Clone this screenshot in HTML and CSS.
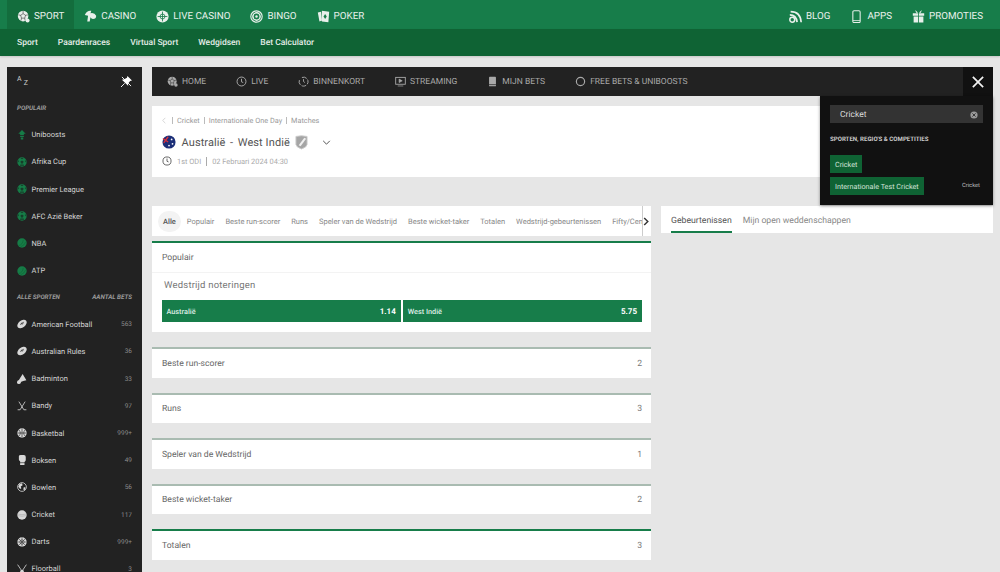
FILE: index.html
```html
<!DOCTYPE html>
<html lang="nl">
<head>
    <meta charset="UTF-8">
    <title>Australië - West Indië</title>
    <link rel="stylesheet" href="styles.css">
</head>
<body>
    <svg class="sprites" width="0" height="0">
        <symbol id="i-ball" viewBox="0 0 16 16"><circle cx="7.5" cy="7.5" r="6.5" fill="currentColor"/><path d="M7.5 4.5l3 2-1 3.5h-4l-1-3.5zM7.5 1v3.5M1.500 6l3 .5M13.500 6l-3 .5M5 13l.5-3M10 13l-.5-3" stroke="#000" stroke-opacity=".55" fill="none"/><circle cx="13" cy="13" r="2.500" fill="currentColor"/></symbol>
        <symbol id="i-round" viewBox="0 0 16 16"><circle cx="8" cy="8" r="7.500" fill="currentColor"/><path d="M3 12q6-1 7-9M6 14q6-2 8-8" stroke="#0f6334" fill="none"/></symbol>
        <symbol id="i-soccer" viewBox="0 0 16 16"><circle cx="8" cy="8" r="7.500" fill="currentColor"/><path d="M8 5.500l2.500 1.800-1 3h-3l-1-3zM5.500 1.500h5L8 3.500zM1 9l.5-4 2 1.500zM15 9l-.5-4-2 1.500zM4.500 14l1-2h5l1 2z" fill="#173d2a"/></symbol>
        <symbol id="i-oval" viewBox="0 0 16 16"><ellipse cx="8" cy="8" rx="8.500" ry="5.500" transform="rotate(-38 8 8)" fill="currentColor"/><path d="M5 9l6-4M6.500 6.500l2 2.500M8 5.500l2 2.500" stroke="#222" fill="none"/></symbol>
        <symbol id="i-shuttle" viewBox="0 0 16 16"><path d="M9 0l6 10-5 1-5 2-3-2z" fill="currentColor"/><circle cx="3" cy="13" r="3" fill="currentColor"/></symbol>
        <symbol id="i-sticks" viewBox="0 0 16 16"><path d="M3 1l8 13h4M13 1L5 14H1" stroke="currentColor" stroke-width="1.300" fill="none"/></symbol>
        <symbol id="i-basket" viewBox="0 0 16 16"><circle cx="8" cy="8" r="7.500" fill="currentColor"/><path d="M1 8h14M8 1v14M3 3c3 3 3 7 0 10M13 3c-3 3-3 7 0 10" stroke="#222" fill="none"/></symbol>
        <symbol id="i-glove" viewBox="0 0 16 16"><path d="M3 2q0-2 3-2h5q3 0 3 3v5q0 2-2 3v1H5v-2Q3 9 3 7z" fill="currentColor"/><rect x="5" y="13" width="7" height="3" fill="currentColor"/></symbol>
        <symbol id="i-globe" viewBox="0 0 16 16"><circle cx="8" cy="8" r="7" fill="none" stroke="currentColor" stroke-width="1.300"/><path d="M4 3l4-1 1 3-3 2 1 3-2 1-3-4zM11 8l3 1-2 4-2-1z" fill="currentColor"/></symbol>
        <symbol id="i-cricket" viewBox="0 0 16 16"><circle cx="8" cy="8" r="7.500" fill="currentColor"/><path d="M1.500 6.500q6.500 2 13 0M1.500 9q6.500 2 13 0" stroke="#aaa" fill="none"/></symbol>
        <symbol id="i-darts" viewBox="0 0 16 16"><circle cx="8" cy="8" r="7.500" fill="currentColor"/><path d="M8 .5v15M.5 8h15M2.700 2.700l10.600 10.600M13.300 2.700L2.700 13.300" stroke="#222" stroke-width=".8"/><circle cx="8" cy="8" r="3.500" fill="none" stroke="#222" stroke-width=".8"/></symbol>
        <symbol id="i-floor" viewBox="0 0 16 16"><path d="M1 1l6 9M15 1L9 10" stroke="currentColor" stroke-width="1.300"/><circle cx="8" cy="12" r="3" fill="currentColor"/></symbol>
        <symbol id="i-clock" viewBox="0 0 16 16"><circle cx="8" cy="8" r="6.500" fill="none" stroke="currentColor" stroke-width="1.400"/><path d="M8 4v4.500l2.500 1" fill="none" stroke="currentColor" stroke-width="1.400"/></symbol>
    </svg>

    <header class="top-nav">
        <nav class="main-links">
            <a class="main-link active"><svg class="nav-icon"><use href="#i-ball"/></svg>SPORT</a>
            <a class="main-link">
                <svg class="nav-icon" viewBox="0 0 16 16"><path d="M1 6q3-6 8-5l-1 3q5-1 7 3 0 4-4 4-2 0-3-2l-1 5H4l1-7z" fill="currentColor"/></svg>CASINO
            </a>
            <a class="main-link">
                <svg class="nav-icon" viewBox="0 0 16 16"><circle cx="8" cy="8" r="7.500" fill="currentColor"/><path d="M8 2v12M2 8h12" stroke="#177d4a"/><circle cx="8" cy="8" r="3" fill="none" stroke="#177d4a"/></svg>LIVE CASINO
            </a>
            <a class="main-link">
                <svg class="nav-icon" viewBox="0 0 16 16"><circle cx="8" cy="8" r="7" fill="none" stroke="currentColor" stroke-width="1.400"/><circle cx="8" cy="8" r="4.500" fill="none" stroke="currentColor" stroke-width="1.800"/><circle cx="8" cy="8" r="1.500" fill="currentColor"/></svg>BINGO
            </a>
            <a class="main-link">
                <svg class="nav-icon" viewBox="0 0 16 16"><path d="M1 3l4-1 1 11-3 1zM6 1l9 1-1 13-8-1z" fill="currentColor"/><path d="M10 5l2 3-2 3-2-3z" fill="#177d4a"/></svg>POKER
            </a>
        </nav>
        <nav class="side-links">
            <a class="main-link">
                <svg class="nav-icon" viewBox="0 0 16 16"><circle cx="4" cy="12" r="3" fill="none" stroke="currentColor" stroke-width="1.800"/><path d="M1 6q8 0 9 9M2 2q12 0 13 13" fill="none" stroke="currentColor" stroke-width="2"/></svg>BLOG
            </a>
            <a class="main-link">
                <svg class="nav-icon" viewBox="0 0 16 16"><rect x="3.500" y="1" width="9" height="14.500" rx="1.500" fill="none" stroke="currentColor" stroke-width="1.300"/><path d="M3.500 13h9" stroke="currentColor"/></svg>APPS
            </a>
            <a class="main-link">
                <svg class="nav-icon" viewBox="0 0 16 16"><path d="M1 4h6.500v3H1zM8.500 4H15v3H8.500zM2 8h5.500v7.500H2zM8.500 8H14v7.500H8.500zM4 0l3.500 3.500H5zM12 0L8.500 3.500H11z" fill="currentColor"/></svg>PROMOTIES
            </a>
        </nav>
    </header>
    <nav class="sub-nav">
        <a>Sport</a>
        <a>Paardenraces</a>
        <a>Virtual Sport</a>
        <a>Wedgidsen</a>
        <a>Bet Calculator</a>
    </nav>

    <div class="page">
        <aside class="sidebar">
            <div class="side-head">
                <span class="az"><span>A</span><span>Z</span></span>
                <svg class="pin" viewBox="0 0 12 12"><path d="M7 0l5 5-2 .5-2.500 3L8 11 1 4l2.500-.5L6.500 2z" fill="#fff"/><path d="M4 8l-4 4M1 1l10 10" stroke="#fff"/></svg>
            </div>
            <div class="side-title first"><span>POPULAIR</span></div>
            <ul class="side-list popular">
                <li><svg viewBox="0 0 16 16"><path d="M8 0l6 6h-3v2H5V6H2zM5 9h6v2H5zM6 12h4v3H6z" fill="currentColor"/></svg><span>Uniboosts</span></li>
                <li><svg><use href="#i-soccer"/></svg><span>Afrika Cup</span></li>
                <li><svg><use href="#i-soccer"/></svg><span>Premier League</span></li>
                <li><svg><use href="#i-soccer"/></svg><span>AFC Azië Beker</span></li>
                <li><svg><use href="#i-round"/></svg><span>NBA</span></li>
                <li><svg><use href="#i-round"/></svg><span>ATP</span></li>
            </ul>
            <div class="side-title"><span>ALLE SPORTEN</span><span>AANTAL BETS</span></div>
            <ul class="side-list">
                <li><svg><use href="#i-oval"/></svg><span>American Football</span><em>563</em></li>
                <li><svg><use href="#i-oval"/></svg><span>Australian Rules</span><em>36</em></li>
                <li><svg><use href="#i-shuttle"/></svg><span>Badminton</span><em>33</em></li>
                <li><svg><use href="#i-sticks"/></svg><span>Bandy</span><em>97</em></li>
                <li><svg><use href="#i-basket"/></svg><span>Basketbal</span><em>999+</em></li>
                <li><svg><use href="#i-glove"/></svg><span>Boksen</span><em>49</em></li>
                <li><svg><use href="#i-globe"/></svg><span>Bowlen</span><em>56</em></li>
                <li><svg><use href="#i-cricket"/></svg><span>Cricket</span><em>117</em></li>
                <li><svg><use href="#i-darts"/></svg><span>Darts</span><em>999+</em></li>
                <li><svg><use href="#i-floor"/></svg><span>Floorball</span><em>3</em></li>
            </ul>
        </aside>

        <main class="content">
            <nav class="dark-bar">
                <a><svg><use href="#i-ball"/></svg>HOME</a>
                <a><svg><use href="#i-clock"/></svg>LIVE</a>
                <a><svg viewBox="0 0 16 16"><path d="M2 6a6.500 6.500 0 1 0 3-3.500" fill="none" stroke="currentColor" stroke-width="1.400" stroke-dasharray="7 2"/><path d="M8 4.500V8l2 1.500" fill="none" stroke="currentColor" stroke-width="1.300"/></svg>BINNENKORT</a>
                <a><svg viewBox="0 0 16 16"><rect x="1" y="2" width="14" height="10" fill="none" stroke="currentColor" stroke-width="1.300"/><path d="M6 4.500l4.500 2.500L6 9.500zM4 14.500h8" fill="currentColor" stroke="currentColor"/></svg>STREAMING</a>
                <a><svg viewBox="0 0 16 16"><rect x="3" y="1" width="10" height="14" rx="1" fill="currentColor"/><path d="M3 12.500h10" stroke="#222"/></svg>MIJN BETS</a>
                <a><svg viewBox="0 0 16 16"><circle cx="8" cy="8" r="6" fill="none" stroke="currentColor" stroke-width="1.700"/></svg>FREE BETS &amp; UNIBOOSTS</a>
            </nav>

            <section class="event-head">
                <div class="crumbs">
                    <svg class="crumb-back" viewBox="0 0 6 10"><path d="M5 1L1 5l4 4" fill="none" stroke="#c4c4c4"/></svg>
                    <i></i><span>Cricket</span><i></i><span>Internationale One Day</span><i></i><span>Matches</span>
                </div>
                <div class="event-title">
                    <svg class="flag" viewBox="0 0 16 16"><circle cx="8" cy="8" r="7.500" fill="#1c2f78"/><path d="M1 4l6 4M7 2L2 9" stroke="#d8303c" stroke-width="1.500"/><circle cx="11" cy="5" r="1" fill="#fff"/><circle cx="12" cy="10" r="1" fill="#fff"/><circle cx="8" cy="12" r="1" fill="#fff"/></svg>
                    <span>Australië</span><span class="dash">-</span><span>West Indië</span>
                    <svg class="shield" viewBox="0 0 14 16"><path d="M1 1.500q6-1.500 12 0V10q0 3-6 5-6-2-6-5z" fill="#a5a5a5" stroke="#ccc"/><path d="M4 11l6-8 2 1-6 8z" fill="#efefef"/></svg>
                    <svg class="chevron" viewBox="0 0 10 6"><path d="M1 1l4 4 4-4" fill="none" stroke="#444" stroke-width="1.100"/></svg>
                </div>
                <div class="event-meta">
                    <svg><use href="#i-clock"/></svg><span>1st ODI</span><i></i><span>02 Februari 2024 04:30</span>
                </div>
            </section>

            <div class="columns">
                <div class="left-col">
                    <nav class="tabs">
                        <div class="tabs-scroll">
                            <a class="active">Alle</a>
                            <a>Populair</a>
                            <a>Beste run-scorer</a>
                            <a>Runs</a>
                            <a>Speler van de Wedstrijd</a>
                            <a>Beste wicket-taker</a>
                            <a>Totalen</a>
                            <a>Wedstrijd-gebeurtenissen</a>
                            <a>Fifty/Cen</a>
                        </div>
                        <button class="tabs-next"><svg viewBox="0 0 6 10"><path d="M1 1l4 4-4 4" fill="none" stroke="#333" stroke-width="1.600"/></svg></button>
                    </nav>

                    <section class="market open">
                        <div class="market-head">Populair</div>
                        <h3>Wedstrijd noteringen</h3>
                        <div class="odds">
                            <button><span>Australië</span><b>1.14</b></button>
                            <button><span>West Indië</span><b>5.75</b></button>
                        </div>
                    </section>

                    <section class="market"><div class="market-head">Beste run-scorer<span>2</span></div></section>
                    <section class="market"><div class="market-head">Runs<span>3</span></div></section>
                    <section class="market"><div class="market-head">Speler van de Wedstrijd<span>1</span></div></section>
                    <section class="market"><div class="market-head">Beste wicket-taker<span>2</span></div></section>
                    <section class="market green"><div class="market-head">Totalen<span>3</span></div></section>
                </div>

                <div class="right-col">
                    <a class="active">Gebeurtenissen</a>
                    <a>Mijn open weddenschappen</a>
                </div>
            </div>
        </main>

        <button class="close-btn"><svg viewBox="0 0 14 14"><path d="M1 1l12 12M13 1L1 13" stroke="#f2f2f2" stroke-width="2"/></svg></button>
        <div class="search-panel">
            <div class="search-box">
                <span>Cricket</span>
                <svg viewBox="0 0 10 10"><circle cx="5" cy="5" r="4.500" fill="#9a9a9a"/><path d="M3 3l4 4M7 3L3 7" stroke="#333" stroke-width="1.200"/></svg>
            </div>
            <div class="search-title">SPORTEN, REGIO'S &amp; COMPETITIES</div>
            <div class="search-row"><a>Cricket</a></div>
            <div class="search-row"><a>Internationale Test Cricket</a><small>Cricket</small></div>
        </div>
    </div>
</body>
</html>
```

FILE: styles.css
```css
html, body {
    height: 100%;
}

body {
    margin: 0;
    height: 572px;
    overflow: hidden;
    background: #e6e6e6;
    color: #555;
    font-family: Roboto, "Liberation Sans", sans-serif;
    font-size: 9px;
    text-rendering: geometricPrecision;
}

a {
    text-decoration: none;
}

ul {
    list-style: none;
    margin: 0;
    padding: 0;
}

button {
    font-family: inherit;
    text-rendering: inherit;
    border: none;
    padding: 0;
}

.sprites {
    position: absolute;
}

/* green header */
.top-nav {
    height: 29px;
    display: flex;
    justify-content: space-between;
    padding: 0 17px 0 7px;
    background: #177d4a;
}

.main-links,
.side-links {
    display: flex;
}

.side-links {
    gap: 20px;
}

.main-link {
    display: flex;
    align-items: center;
    gap: 4px;
    padding: 3px 10px 0;
    color: #e8f0eb;
    font-size: 9.800px;
    white-space: nowrap;
}

.side-links .main-link {
    padding: 3px 0 0;
}

.main-link.active {
    background: #136d3d;
}

.nav-icon {
    width: 13px;
    height: 13px;
    flex: none;
}

.sub-nav {
    height: 27px;
    display: flex;
    align-items: center;
    gap: 20px;
    padding-left: 17px;
    background: #0f6334;
    box-shadow: 0 1px 2px rgba(0, 0, 0, 0.15);
}

.sub-nav a {
    padding-top: 1px;
    color: #e4ece7;
    font-size: 8.500px;
    font-weight: 500;
}

.page {
    position: relative;
    display: flex;
    gap: 10px;
    padding: 11px 7px 0;
}

/* sidebar */
.sidebar {
    width: 135px;
    height: 520px;
    flex: none;
    background: #222;
    box-sizing: border-box;
    padding: 0 10px;
    overflow: hidden;
}

.side-head {
    height: 28.400px;
    display: flex;
    justify-content: space-between;
    align-items: center;
    color: #ccc;
}

.az {
    position: relative;
    width: 11px;
    height: 12px;
    font-size: 7px;
}

.az span:last-child {
    position: absolute;
    right: 0;
    bottom: 0;
}

.pin {
    width: 11px;
    height: 11px;
}

.side-title {
    display: flex;
    justify-content: space-between;
    height: 26.500px;
    align-items: center;
    color: #9a9a9a;
    font-size: 6.300px;
    font-style: italic;
    font-weight: 700;
}

.side-title.first {
    height: 25px;
}

.side-list li {
    height: 27.200px;
    box-sizing: border-box;
    padding-top: 1.400px;
    display: flex;
    align-items: center;
    color: #d4d4d4;
    font-size: 7.500px;
}

.side-list svg {
    width: 10px;
    height: 10px;
    margin-right: 4.500px;
    color: #d8d8d8;
    flex: none;
}

.side-list.popular svg {
    color: #167c47;
}

.side-list span {
    flex: 1;
    white-space: nowrap;
}

.side-list em {
    color: #8d8d8d;
    font-size: 6.500px;
    font-style: normal;
}

/* main */
.content {
    width: 841px;
    flex: none;
}

.dark-bar {
    height: 29px;
    display: flex;
    align-items: center;
    gap: 30px;
    padding-left: 15px;
    background: #222;
}

.dark-bar a {
    display: flex;
    align-items: center;
    gap: 4px;
    color: #a9a9a9;
    font-size: 8.500px;
}

.dark-bar svg {
    width: 11px;
    height: 11px;
    color: #a9a9a9;
}

.event-head {
    height: 71px;
    margin-top: 10px;
    box-sizing: border-box;
    padding: 9px 10px 0;
    background: #fff;
}

.crumbs {
    display: flex;
    align-items: center;
    height: 10px;
    color: #999;
    font-size: 7.300px;
}

.crumbs i {
    width: 1px;
    height: 7px;
    margin: 0 4px;
    background: #bbb;
}

.crumb-back {
    width: 4px;
    height: 7px;
    margin-right: 2px;
}

.event-title {
    display: flex;
    align-items: center;
    gap: 4.500px;
    height: 18px;
    margin-top: 8px;
    color: #555;
    font-size: 11px;
    letter-spacing: 0.100px;
}

.flag {
    width: 14px;
    height: 14px;
    margin-right: 1px;
}

.shield {
    width: 13px;
    height: 15px;
    margin-left: 1px;
}

.chevron {
    width: 9px;
    height: 5px;
    margin-left: 9px;
}

.event-meta {
    display: flex;
    align-items: center;
    height: 10px;
    margin-top: 5px;
    color: #aaa;
    font-size: 7.400px;
}

.event-meta svg {
    width: 10px;
    height: 10px;
    margin-right: 5px;
    color: #555;
}

.event-meta i {
    width: 1px;
    height: 9px;
    margin: 0 5px;
    background: #aaa;
}

.columns {
    display: flex;
    gap: 10px;
    margin-top: 29px;
}

.left-col {
    width: 499px;
    flex: none;
}

.tabs {
    height: 30px;
    display: flex;
    background: #fff;
}

.tabs-scroll {
    width: 490px;
    display: flex;
    align-items: center;
    gap: 11px;
    padding-left: 6px;
    box-sizing: border-box;
    white-space: nowrap;
}

.tabs-scroll a {
    color: #888;
    font-size: 7.500px;
}

.tabs-scroll a.active {
    padding: 6px 5px;
    margin-right: -5px;
    border-radius: 11px;
    background: #f3f3f3;
    color: #555;
    font-weight: 500;
}

.tabs-next {
    width: 9px;
    border-left: 1px solid #ccc;
    background: #fff;
    display: flex;
    align-items: center;
}

.tabs-next svg {
    width: 6px;
    height: 9px;
}

.market {
    margin-top: 15px;
    border-top: 2px solid #a9bbb1;
    background: #fff;
}

.market.green,
.market.open {
    border-top-color: #177d4a;
}

.market.open {
    height: 91px;
    box-sizing: border-box;
    margin-top: 5px;
}

.market:not(.open) {
    height: 30.500px;
    box-sizing: border-box;
}

.market-head {
    display: flex;
    justify-content: space-between;
    align-items: center;
    height: 29px;
    padding: 0 9px 0 10px;
    color: #666;
    font-size: 8.600px;
}

.market-head span {
    color: #777;
}

.market.open .market-head {
    border-bottom: 1px solid #f3f3f3;
}

.market h3 {
    margin: 7px 0 0 12px;
    color: #777;
    font-size: 9.500px;
    font-weight: 400;
    letter-spacing: 0.200px;
}

.odds {
    display: flex;
    gap: 2.500px;
    margin: 9px 9px 0 10px;
}

.odds button {
    flex: 1;
    height: 22px;
    display: flex;
    justify-content: space-between;
    align-items: center;
    padding: 0 5px 0 4.500px;
    background: #177d4a;
    color: #dfeee6;
    font-size: 7.300px;
    font-weight: 500;
}

.odds b {
    color: #fff;
    font-size: 8px;
    font-weight: 700;
}

.right-col {
    flex: 1;
    height: 27px;
    display: flex;
    gap: 11px;
    padding-left: 10px;
    background: #fff;
}

.right-col a {
    height: 27px;
    box-sizing: border-box;
    padding-top: 9.500px;
    color: #888;
    font-size: 8.700px;
}

.right-col a.active {
    color: #555;
    border-bottom: 2px solid #177d4a;
}

/* search overlay */
.close-btn {
    position: absolute;
    top: 11px;
    right: 7px;
    width: 30px;
    height: 29px;
    display: flex;
    align-items: center;
    justify-content: center;
    background: #111;
}

.close-btn svg {
    width: 12px;
    height: 12px;
}

.search-panel {
    position: absolute;
    top: 40px;
    right: 7px;
    width: 173px;
    height: 109px;
    box-sizing: border-box;
    padding: 9px 10px 0;
    background: #111;
    box-shadow: 0 1px 3px rgba(0, 0, 0, 0.4);
}

.search-box {
    height: 18px;
    display: flex;
    justify-content: space-between;
    align-items: center;
    padding: 1px 5px 0 10px;
    box-sizing: border-box;
    background: #333;
    color: #ddd;
    font-size: 8.500px;
}

.search-box svg {
    width: 8px;
    height: 8px;
}

.search-title {
    margin-top: 13px;
    color: #ccc;
    font-size: 6.100px;
    font-weight: 700;
}

.search-row {
    display: flex;
    justify-content: space-between;
    align-items: center;
    margin-top: 4px;
}

.search-title + .search-row {
    margin-top: 12px;
}

.search-row a {
    display: block;
    padding: 4.500px 5px;
    background: #0f6334;
    color: #d5e4db;
    font-size: 7.200px;
    line-height: 9px;
}

.search-row small {
    margin-right: 3px;
    color: #bbb;
    font-size: 5.800px;
}
```
